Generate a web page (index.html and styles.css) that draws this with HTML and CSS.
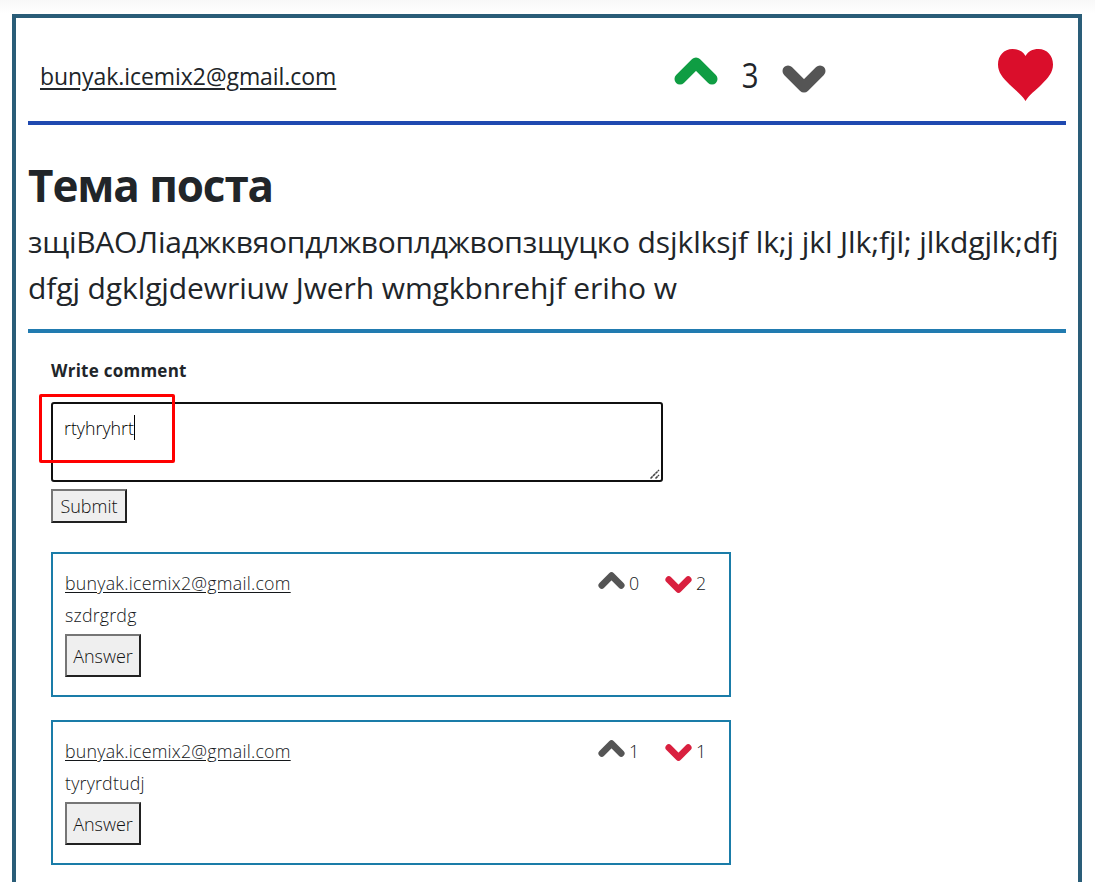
FILE: index.html
```
<!DOCTYPE html>
<html lang="ru">
<head>
<meta charset="utf-8">
<title>Тема поста</title>
<link rel="stylesheet" href="styles.css">
</head>
<body>
<svg class="defs" width="0" height="0" aria-hidden="true">
  <symbol id="chevron-up" viewBox="0 0 44 28"><path d="M6 22 22 6 38 22" fill="none" stroke="currentColor" stroke-width="11" stroke-linecap="round" stroke-linejoin="round"/></symbol>
  <symbol id="chevron-down" viewBox="0 0 44 28"><path d="M6 6 22 22 38 6" fill="none" stroke="currentColor" stroke-width="11" stroke-linecap="round" stroke-linejoin="round"/></symbol>
</svg>
<main class="post">
  <header class="post-header">
    <a class="author">bunyak.icemix2@gmail.com</a>
    <div class="votes">
      <svg class="vote up"><use href="#chevron-up"/></svg>
      <span class="score">3</span>
      <svg class="vote down"><use href="#chevron-down"/></svg>
    </div>
    <svg class="heart" viewBox="0 0 55 52"><path d="M27.5 52C23.5 45.500 17.500 41.500 11.500 35.500C5 29 0 23.500 0 15.500C0 6.500 6 0 14.500 0C20.500 0 25 2.500 27.500 7C30 2.500 34.500 0 40.500 0C49 0 55 6.500 55 15.500C55 23.500 50 29 43.500 35.500C37.500 41.500 31.500 45.500 27.500 52Z" fill="#da0e2b"/></svg>
  </header>
  <section class="post-body">
    <h1 class="title">Тема поста</h1>
    <p class="text"><span class="line"><span class="cyrillic">зщіВАОЛіаджквяопдлжвоплджвопзщуцко</span> dsjklksjf lk;j jkl Jlk;fjl; jlkdgjlk;dfj</span> <span class="line">dfgj dgklgjdewriuw Jwerh wmgkbnrehjf eriho w</span></p>
  </section>
  <section class="comments">
    <form class="comment-form">
      <label class="label">Write comment</label>
      <div class="field">
        <span class="value">rtyhryhrt</span><span class="caret"></span>
        <svg class="grip" viewBox="0 0 10 10"><path d="M.5 9.500 9 1M5.500 9.500 9 6" stroke="#444" stroke-width="1.500" stroke-dasharray="3 .5" fill="none"/></svg>
        <div class="highlight"></div>
      </div>
      <button class="button submit" type="button">Submit</button>
    </form>
    <article class="comment">
      <div class="comment-head">
        <a class="comment-author">bunyak.icemix2@gmail.com</a>
        <span class="comment-vote"><svg class="small up"><use href="#chevron-up"/></svg><span>0</span></span>
        <span class="comment-vote"><svg class="small down"><use href="#chevron-down"/></svg><span>2</span></span>
      </div>
      <p class="comment-text">szdrgrdg</p>
      <button class="button answer" type="button">Answer</button>
    </article>
    <article class="comment">
      <div class="comment-head">
        <a class="comment-author">bunyak.icemix2@gmail.com</a>
        <span class="comment-vote"><svg class="small up"><use href="#chevron-up"/></svg><span>1</span></span>
        <span class="comment-vote"><svg class="small down"><use href="#chevron-down"/></svg><span>1</span></span>
      </div>
      <p class="comment-text">tyryrdtudj</p>
      <button class="button answer" type="button">Answer</button>
    </article>
  </section>
</main>
</body>
</html>
```
FILE: styles.css
```
* { box-sizing: border-box; }
body {
  margin: 0;
  height: 882px;
  padding: 14px 13px 0 12px;
  font-family: "Open Sans", "Noto Sans", sans-serif;
  color: #212529;
  background: linear-gradient(#f8f8f8, #fff 13px) no-repeat #fff;
}
.defs { position: absolute; }
.post {
  height: 868px;
  border: 4px solid #2a5d78;
  border-bottom: 0;
  padding: 0 12px;
}
.post-header {
  display: flex;
  height: 107px;
  border-bottom: 4px solid #1f49b0;
  padding: 0 13px 0 12px;
}
.author {
  width: 633.5px;
  flex: none;
  margin-top: 41px;
  font-size: 23px;
  line-height: 34px;
  letter-spacing: -.06px;
  text-decoration: underline;
  text-decoration-thickness: 2px;
  text-underline-offset: 3px;
}
.votes { display: flex; flex: 1; }
.vote { width: 44px; height: 28px; }
.vote.up { margin-top: 39px; color: #0f9d43; }
.vote.down { margin-top: 46.5px; color: #555; }
.score {
  width: 64.5px;
  margin-top: 36px;
  font-size: 35px;
  line-height: 42px;
  text-align: center;
  transform: scaleX(.84);
}
.heart { width: 55px; height: 52px; margin-top: 31px; }
.post-body {
  height: 208px;
  border-bottom: 4px solid #217bb0;
  padding-top: 32px;
}
.title {
  margin: 0;
  font-size: 44px;
  line-height: 56px;
  font-weight: 700;
  letter-spacing: -1.1px;
}
.text {
  margin: 6px 0 0;
  font-size: 30px;
  line-height: 46px;
  letter-spacing: -.1px;
  white-space: nowrap;
}
.cyrillic { letter-spacing: -.26px; }
.line { display: block; }
.comments { padding: 26px 23px 0; }
.label {
  display: block;
  height: 43px;
  font-size: 17px;
  line-height: 24px;
  font-weight: 700;
  letter-spacing: .25px;
}
.field {
  position: relative;
  display: flex;
  width: 612px;
  height: 80px;
  border: 2px solid #101010;
  border-radius: 3px;
  padding: 11px;
  font-size: 17.8px;
  line-height: 27px;
  font-weight: 300;
  color: #000;
}
.caret { width: 1px; height: 25px; background: #000; }
.grip { position: absolute; right: 1px; bottom: 1px; width: 10px; height: 10px; }
.highlight {
  position: absolute;
  left: -14px;
  top: -10px;
  width: 136px;
  height: 69px;
  border: 3px solid #f00;
  border-radius: 2px;
}
.button {
  display: block;
  width: 76px;
  padding: 0;
  border: 2px solid;
  border-color: #767676 #212121 #212121 #767676;
  background: #efefef;
  color: #111;
  font-family: inherit;
  font-size: 18px;
  font-weight: 300;
}
.submit { height: 34px; margin-top: 7px; }
.answer { height: 43px; padding-top: 1px; }
.comment {
  width: 680px;
  height: 145px;
  border: 2px solid #1a7ca8;
  margin-top: 23px;
  padding: 14px 12px 0;
  font-size: 17.8px;
  font-weight: 300;
  color: #14171a;
}
.comment-form + .comment { margin-top: 29px; }
.comment-head { display: flex; height: 32px; line-height: 31px; }
.comment-author {
  width: 533px;
  flex: none;
  letter-spacing: .24px;
  text-decoration: underline;
  text-underline-offset: 2px;
}
.comment-vote { display: flex; flex: none; width: 67px; gap: 4px; white-space: nowrap; }
.small { width: 27px; height: 17px; flex: none; }
.small.up { margin-top: 4px; color: #555; }
.small.down { margin-top: 8px; color: #d9203f; }
.comment-text { margin: 0; height: 34px; line-height: 30px; letter-spacing: .2px; }
```
